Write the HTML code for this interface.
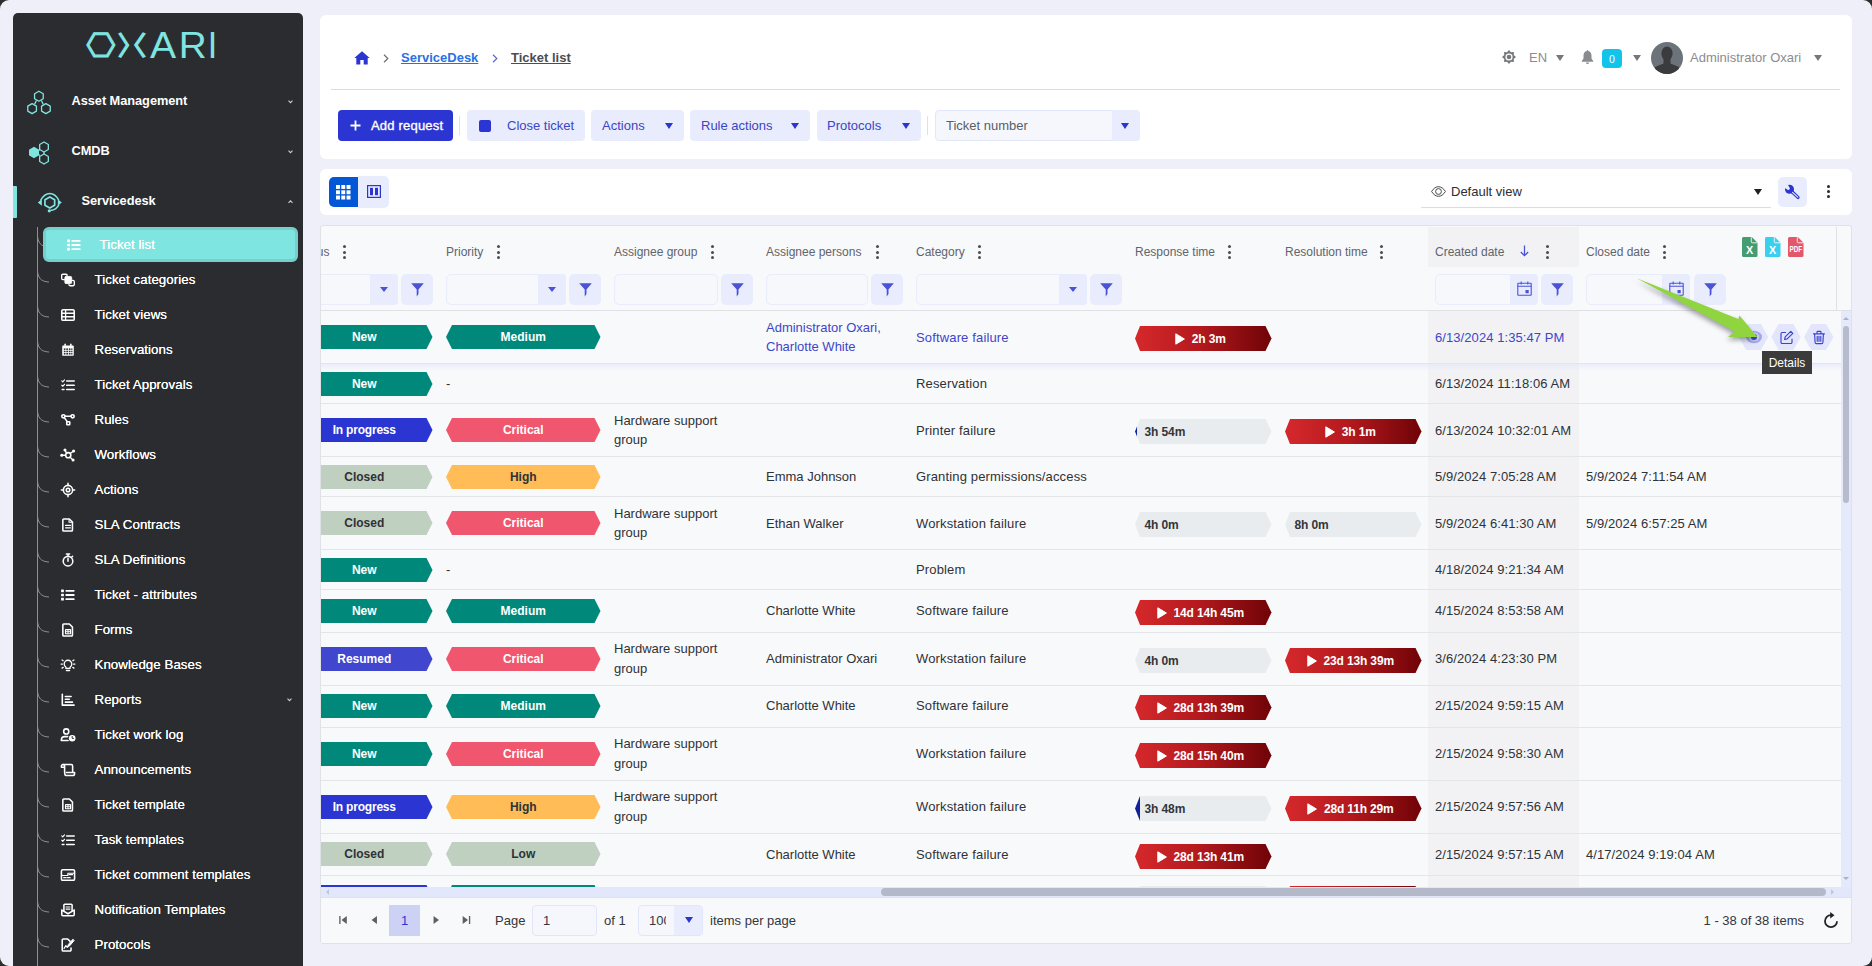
<!DOCTYPE html>
<html lang="en"><head><meta charset="utf-8"><title>Ticket list</title>
<style>
*{box-sizing:border-box;margin:0;padding:0}
html,body{width:1872px;height:966px;overflow:hidden}
body{background:#eeeff8;font-family:"Liberation Sans",Arial,sans-serif;font-size:13px;color:#2f3237;position:relative}
.abs{position:absolute}
svg{display:block;overflow:visible}
/* page corners */
.corner{position:absolute;width:9px;height:9px;background:#2d2d2d}
.corner i{position:absolute;width:18px;height:18px;border-radius:9px;background:#eeeff8}
/* sidebar */
#side{position:absolute;left:13px;top:13px;width:290px;height:960px;background:#2b2c2f;border-radius:5px 5px 0 0;overflow:hidden}
.top{position:absolute;left:0;width:290px;height:50px;color:#fff;font-weight:bold;font-size:12.8px;letter-spacing:-0.05px}
.top span{position:absolute;top:50%;transform:translateY(-50%);white-space:nowrap}
.top .chev{position:absolute;right:10px;top:50%;margin-top:0px}
.sub{position:absolute;left:0;width:290px;height:35px;color:#fff;font-size:13.3px}
.sub span{position:absolute;left:81.5px;top:50%;margin-top:-1px;transform:translateY(-50%);white-space:nowrap;letter-spacing:0.05px;text-shadow:0 0 0.4px #fff}
.sub svg.ic{position:absolute;left:47px;top:50%;margin-top:-8px}
.sub .br{position:absolute;left:24px;top:0}
/* panels */
#top{position:absolute;left:320px;top:15px;width:1532px;height:144px;background:#fff;border-radius:6px}
#vbar{position:absolute;left:320px;top:169px;width:1532px;height:46px;background:#fff;border-radius:6px}
#grid{position:absolute;left:320px;top:225px;width:1532px;height:719px;background:#f8f9fb;border:1px solid #dfe1e6;border-radius:3px;overflow:hidden}
.btn{position:absolute;top:95px;height:31px;border-radius:4px;background:#e8ecfd;color:#3b45c4;font-size:13px;white-space:nowrap}
.btn span{position:absolute;top:50%;margin-top:-1px;transform:translateY(-50%)}
.tri{position:absolute;width:0;height:0;border-left:4.5px solid transparent;border-right:4.5px solid transparent;border-top:6px solid #2b35d1}
/* grid */
.hd{position:absolute;top:17px;font-size:12px;color:#60646b;white-space:nowrap;height:16px;line-height:16px}
.dots{position:absolute;top:18px;width:3px}
.dots i{display:block;width:3px;height:3px;border-radius:50%;background:#4a4d52;margin-bottom:2.5px}
.fin{position:absolute;top:47px;height:31px;border:1px solid #e8ecfc;border-radius:5px;background:#f7f8fc}
.fin .dd{position:absolute;right:-1px;top:-1px;width:28px;height:31px;background:#e8ecfd;border-radius:0 4px 4px 0}
.fbtn{position:absolute;top:47px;width:32px;height:31px;border-radius:5px;background:#e8ecfd}
.row{position:absolute;left:0;width:1520px;border-bottom:1px solid #e4e5e9}
.c{position:absolute;font-size:13px;line-height:19px;color:#2f3237;white-space:nowrap}
.row.hov .c{color:#3d46c9}
.bdg{position:absolute;height:24px;font-weight:bold;font-size:12px;color:#fff;text-align:center;line-height:24px;white-space:nowrap}
.tb{position:absolute;height:25px;font-weight:bold;font-size:12px;line-height:27px;white-space:nowrap;width:136.5px;clip-path:polygon(5px 0,130.5px 0,136.5px 50%,130.5px 100%,5px 100%,0 50%)}
.tb.red{background:linear-gradient(90deg,#d5292c 0%,#b51a1e 45%,#6f0307 100%);color:#fff;text-align:center;padding-right:6px;letter-spacing:-.15px}
.tb.gr{background:#e9ecef;color:#33363b;text-align:left;padding-left:9.5px;letter-spacing:-0.1px}
.tb.red svg{display:inline-block;vertical-align:-2px;margin-right:7px}
</style></head><body>
<div class="corner" style="left:0;top:0"><i style="left:0;top:0"></i></div>
<div class="corner" style="right:0;top:0"><i style="right:0;top:0"></i></div>
<div class="corner" style="left:0;bottom:0"><i style="left:0;bottom:0"></i></div>
<div class="corner" style="right:0;bottom:0"><i style="right:0;bottom:0"></i></div>
<div id="side">
<svg class="abs" style="left:60px;top:10px" width="170" height="50" viewBox="60 10 170 50" fill="#7fe5e0"><title>OXARI</title>
<text id="lgO" x="0" y="0" font-family="DejaVu Sans, sans-serif" font-size="40" stroke="#7fe5e0" stroke-width="1.3" transform="translate(73.21 44.33) scale(0.836 0.839)">⎔</text>
<text id="lgX1" x="0" y="0" font-family="Noto Sans CJK JP, sans-serif" font-size="30" stroke="#7fe5e0" stroke-width="1.5" transform="translate(104.83 41.53) scale(0.875 0.867)">〉</text>
<text id="lgX2" x="0" y="0" font-family="Noto Sans CJK JP, sans-serif" font-size="30" stroke="#7fe5e0" stroke-width="1.5" transform="translate(105.38 41.53) scale(0.925 0.867)">〈</text>
<text id="lgA" x="0" y="0" font-family="Liberation Sans, sans-serif" font-size="36" transform="translate(136.90 45) scale(1.087 1.05)">A</text>
<text id="lgR" x="0" y="0" font-family="Liberation Sans, sans-serif" font-size="36" transform="translate(165.77 45) scale(1.076 1)">R</text>
<text id="lgI" x="0" y="0" font-family="Liberation Sans, sans-serif" font-size="36" transform="translate(194.75 45) scale(0.95 1)">I</text>
</svg>
<div class="top" style="top:62px"><svg class="abs" style="left:12px;top:13.500px" width="28" height="28" viewBox="0 0 28 28" fill="none" stroke="#7fe5e0" stroke-width="1.300" stroke-linejoin="round"><polygon points="13.90,2.20 18.23,4.70 18.23,9.70 13.90,12.20 9.57,9.70 9.57,4.70"/><polygon points="7.10,14.60 11.43,17.10 11.43,22.10 7.10,24.60 2.77,22.10 2.77,17.10"/><polygon points="20.90,14.60 25.23,17.10 25.23,22.10 20.90,24.60 16.57,22.10 16.57,17.10"/><path d="M11.400 11.500l-1.800 3.800M16.400 11.500l1.800 3.800"/></svg><span style="left:58.500px">Asset Management</span><svg class="chev" width="5" height="3.400" viewBox="0 0 6 4" fill="none" stroke="#cfcfcf" stroke-width="1.300"><path d="M.6.700L3 3.100 5.400.700"/></svg></div>
<div class="top" style="top:112px"><svg class="abs" style="left:12px;top:12.500px" width="28" height="28" viewBox="0 0 28 28" fill="none" stroke="#7fe5e0" stroke-width="1.300" stroke-linejoin="round"><polygon fill="#7fe5e0" points="9.00,9.50 13.33,12.00 13.33,17.00 9.00,19.50 4.67,17.00 4.67,12.00"/><polygon points="19.00,4.00 23.33,6.50 23.33,11.50 19.00,14.00 14.67,11.50 14.67,6.50"/><polygon points="19.00,16.00 23.33,18.50 23.33,23.50 19.00,26.00 14.67,23.50 14.67,18.50"/><path d="M13.500 12.500l1.400-1M13.500 16.500l1.400 1M19 14v2"/></svg><span style="left:58.500px">CMDB</span><svg class="chev" width="5" height="3.400" viewBox="0 0 6 4" fill="none" stroke="#cfcfcf" stroke-width="1.300"><path d="M.6.700L3 3.100 5.400.700"/></svg></div>
<div class="top" style="top:162px"><i class="abs" style="left:0;top:11px;width:4px;height:32px;background:#7fe5e0;border-radius:0 1px 1px 0"></i><svg class="abs" style="left:24px;top:13px" width="28" height="28" viewBox="0 0 28 28" fill="none" stroke="#7fe5e0" stroke-width="1.500" stroke-linejoin="round"><polygon points="12.80,8.90 17.65,11.70 17.65,17.30 12.80,20.10 7.95,17.30 7.95,11.70" stroke-width="1.700"/><path d="M3.500 12.500C6 8 9.500 5.500 12.800 5.500S19.600 8 22 12.500"/><path d="M22 16.500c-1.500 3.500-4.500 5.500-8.500 6"/><polygon fill="#7fe5e0" stroke="none" points="0.800,14.500 4.800,11.300 4.800,17.700"/><polygon fill="#7fe5e0" stroke="none" points="24.800,14.500 20.800,11.300 20.800,17.700"/><circle cx="12.300" cy="22.800" r="1.600" fill="#7fe5e0" stroke="none"/></svg><span style="left:68.500px">Servicedesk</span><svg class="chev" width="5" height="3.400" viewBox="0 0 6 4" fill="none" stroke="#cfcfcf" stroke-width="1.300"><path d="M.6 3.300L3 .9 5.400 3.300"/></svg></div>
<div class="abs" style="left:24px;top:214px;width:1px;height:760px;background:#8f9092"></div>
<div class="sub" style="top:214px"><svg class="br" width="14" height="35" viewBox="0 0 14 35" fill="none" stroke="#8f9092" stroke-width="1"><path d="M.5 8.500C.8 15 3.500 19.800 12 20"/></svg><div class="abs" style="left:30px;top:0;width:255px;height:35px;background:#7fe5e0;border:3px solid #76cfcb;border-radius:6px"></div><svg class="ic" style="left:53px" width="16" height="16" viewBox="0 0 18 18" fill="none" stroke="#fff" stroke-width="1.75" stroke-linecap="round" stroke-linejoin="round"><g stroke="none" fill="#fff"><rect x="1.200" y="2.800" width="3.200" height="3" rx=".6"/><rect x="1.200" y="7.500" width="3.200" height="3" rx=".6"/><rect x="1.200" y="12.200" width="3.200" height="3" rx=".6"/><rect x="6" y="3.300" width="10.500" height="2" rx="1"/><rect x="6" y="8" width="10.500" height="2" rx="1"/><rect x="6" y="12.700" width="10.500" height="2" rx="1"/></g></svg><span style="left:86.500px">Ticket list</span></div>
<div class="sub" style="top:249px"><svg class="br" width="14" height="35" viewBox="0 0 14 35" fill="none" stroke="#8f9092" stroke-width="1"><path d="M.5 8.500C.8 15 3.500 19.800 12 20"/></svg><svg class="ic" width="16" height="16" viewBox="0 0 18 18" fill="none" stroke="#fff" stroke-width="1.75" stroke-linecap="round" stroke-linejoin="round"><path d="M5 8.600H3.200a1.300 1.300 0 0 1-1.300-1.300V3.800a1.300 1.300 0 0 1 1.300-1.300h3.500a1.300 1.300 0 0 1 1.300 1.300" stroke-width="1.500"/><path d="M13 9.400h1.800a1.300 1.300 0 0 1 1.300 1.300v3.500a1.300 1.300 0 0 1-1.300 1.300h-3.500a1.300 1.300 0 0 1-1.300-1.300" stroke-width="1.500"/><rect x="5.500" y="5" width="7.600" height="8" rx="1.200" fill="#fff" stroke-width="1"/></svg><span>Ticket categories</span></div>
<div class="sub" style="top:284px"><svg class="br" width="14" height="35" viewBox="0 0 14 35" fill="none" stroke="#8f9092" stroke-width="1"><path d="M.5 8.500C.8 15 3.500 19.800 12 20"/></svg><svg class="ic" width="16" height="16" viewBox="0 0 18 18" fill="none" stroke="#fff" stroke-width="1.75" stroke-linecap="round" stroke-linejoin="round"><rect x="2" y="3" width="14" height="12" rx="1.600"/><path d="M2 7h14M2 11h14M6.300 3.500v11" stroke-width="1.500"/></svg><span>Ticket views</span></div>
<div class="sub" style="top:319px"><svg class="br" width="14" height="35" viewBox="0 0 14 35" fill="none" stroke="#8f9092" stroke-width="1"><path d="M.5 8.500C.8 15 3.500 19.800 12 20"/></svg><svg class="ic" width="16" height="16" viewBox="0 0 18 18" fill="none" stroke="#fff" stroke-width="1.75" stroke-linecap="round" stroke-linejoin="round"><g stroke="none" fill="#fff"><path d="M3.500 4h11a1 1 0 0 1 1 1v9.500a1 1 0 0 1-1 1h-11a1 1 0 0 1-1-1V5a1 1 0 0 1 1-1z"/><rect x="5" y="1.800" width="1.600" height="3.500" rx=".8"/><rect x="11.400" y="1.800" width="1.600" height="3.500" rx=".8"/></g><g stroke="none" fill="#2b2c2f"><rect x="4.300" y="7.200" width="1.900" height="1.700"/><rect x="7.100" y="7.200" width="1.900" height="1.700"/><rect x="9.900" y="7.200" width="1.900" height="1.700"/><rect x="12.600" y="7.200" width="1.400" height="1.700"/><rect x="4.300" y="9.800" width="1.900" height="1.700"/><rect x="7.100" y="9.800" width="1.900" height="1.700"/><rect x="9.900" y="9.800" width="1.900" height="1.700"/><rect x="12.600" y="9.800" width="1.400" height="1.700"/><rect x="4.300" y="12.400" width="1.900" height="1.700"/><rect x="7.100" y="12.400" width="1.900" height="1.700"/><rect x="9.900" y="12.400" width="1.900" height="1.700"/><rect x="12.600" y="12.400" width="1.400" height="1.700"/></g></svg><span>Reservations</span></div>
<div class="sub" style="top:354px"><svg class="br" width="14" height="35" viewBox="0 0 14 35" fill="none" stroke="#8f9092" stroke-width="1"><path d="M.5 8.500C.8 15 3.500 19.800 12 20"/></svg><svg class="ic" width="16" height="16" viewBox="0 0 18 18" fill="none" stroke="#fff" stroke-width="1.75" stroke-linecap="round" stroke-linejoin="round"><path d="M2 4.300l1.100 1.100 2-2.200M2 9.300l1.100 1.100 2-2.200" stroke-width="1.300"/><path d="M7.500 4.400h8.500M7.500 9.200h8.500M7.500 14h8.500M2.500 14h2" stroke-width="1.700"/></svg><span>Ticket Approvals</span></div>
<div class="sub" style="top:389px"><svg class="br" width="14" height="35" viewBox="0 0 14 35" fill="none" stroke="#8f9092" stroke-width="1"><path d="M.5 8.500C.8 15 3.500 19.800 12 20"/></svg><svg class="ic" width="16" height="16" viewBox="0 0 18 18" fill="none" stroke="#fff" stroke-width="1.75" stroke-linecap="round" stroke-linejoin="round"><circle cx="3.800" cy="4.800" r="1.800"/><circle cx="14.200" cy="4.800" r="1.800"/><rect x="7.600" y="11" width="3.400" height="3.400" rx=".6"/><path d="M5.600 4.800h6.800M4.800 6.300l3.300 4.500"/></svg><span>Rules</span></div>
<div class="sub" style="top:424px"><svg class="br" width="14" height="35" viewBox="0 0 14 35" fill="none" stroke="#8f9092" stroke-width="1"><path d="M.5 8.500C.8 15 3.500 19.800 12 20"/></svg><svg class="ic" width="16" height="16" viewBox="0 0 18 18" fill="none" stroke="#fff" stroke-width="1.75" stroke-linecap="round" stroke-linejoin="round"><circle cx="9.300" cy="9.200" r="2.900"/><path d="M7.500 6.900L6 4.400M11.500 7.300l3-2.300M11.300 11.400l2.700 2.700M6.400 9.300H3" stroke-width="1.500"/><g fill="#fff" stroke="none"><circle cx="5.600" cy="3.500" r="1.700"/><circle cx="15.300" cy="4.600" r="1.700"/><circle cx="14.700" cy="14.700" r="1.700"/><circle cx="2" cy="9.300" r="1.700"/></g></svg><span>Workflows</span></div>
<div class="sub" style="top:459px"><svg class="br" width="14" height="35" viewBox="0 0 14 35" fill="none" stroke="#8f9092" stroke-width="1"><path d="M.5 8.500C.8 15 3.500 19.800 12 20"/></svg><svg class="ic" width="16" height="16" viewBox="0 0 18 18" fill="none" stroke="#fff" stroke-width="1.75" stroke-linecap="round" stroke-linejoin="round"><circle cx="9" cy="9" r="5.200"/><circle cx="9" cy="9" r="2" /><path d="M9 1.500v2.300M9 14.200v2.300M1.500 9h2.300M14.200 9h2.300" stroke-width="1.700"/></svg><span>Actions</span></div>
<div class="sub" style="top:494px"><svg class="br" width="14" height="35" viewBox="0 0 14 35" fill="none" stroke="#8f9092" stroke-width="1"><path d="M.5 8.500C.8 15 3.500 19.800 12 20"/></svg><svg class="ic" width="16" height="16" viewBox="0 0 18 18" fill="none" stroke="#fff" stroke-width="1.75" stroke-linecap="round" stroke-linejoin="round"><path d="M4.200 2.200h6.300l3.500 3.500v9.100a1 1 0 0 1-1 1H4.200a1 1 0 0 1-1-1V3.200a1 1 0 0 1 1-1z"/><path d="M6.300 9.500h5.400M6.300 12.200h5.400" stroke-width="1.500"/><path d="M10.200 2.500v3.500h3.500" stroke-width="1.200"/></svg><span>SLA Contracts</span></div>
<div class="sub" style="top:529px"><svg class="br" width="14" height="35" viewBox="0 0 14 35" fill="none" stroke="#8f9092" stroke-width="1"><path d="M.5 8.500C.8 15 3.500 19.800 12 20"/></svg><svg class="ic" width="16" height="16" viewBox="0 0 18 18" fill="none" stroke="#fff" stroke-width="1.75" stroke-linecap="round" stroke-linejoin="round"><circle cx="9" cy="10.300" r="5.400"/><path d="M9 7.300v3.200M7.200 2.300h3.600M9 2.500v2.300M13.300 5.600l.9-.9" stroke-width="1.700"/></svg><span>SLA Definitions</span></div>
<div class="sub" style="top:564px"><svg class="br" width="14" height="35" viewBox="0 0 14 35" fill="none" stroke="#8f9092" stroke-width="1"><path d="M.5 8.500C.8 15 3.500 19.800 12 20"/></svg><svg class="ic" width="16" height="16" viewBox="0 0 18 18" fill="none" stroke="#fff" stroke-width="1.75" stroke-linecap="round" stroke-linejoin="round"><g stroke="none" fill="#fff"><rect x="1.200" y="2.800" width="3.200" height="3" rx=".6"/><rect x="1.200" y="7.500" width="3.200" height="3" rx=".6"/><rect x="1.200" y="12.200" width="3.200" height="3" rx=".6"/><rect x="6" y="3.300" width="10.500" height="2" rx="1"/><rect x="6" y="8" width="10.500" height="2" rx="1"/><rect x="6" y="12.700" width="10.500" height="2" rx="1"/></g></svg><span>Ticket - attributes</span></div>
<div class="sub" style="top:599px"><svg class="br" width="14" height="35" viewBox="0 0 14 35" fill="none" stroke="#8f9092" stroke-width="1"><path d="M.5 8.500C.8 15 3.500 19.800 12 20"/></svg><svg class="ic" width="16" height="16" viewBox="0 0 18 18" fill="none" stroke="#fff" stroke-width="1.75" stroke-linecap="round" stroke-linejoin="round"><path d="M4.200 2.200h6.300l3.500 3.500v9.100a1 1 0 0 1-1 1H4.200a1 1 0 0 1-1-1V3.200a1 1 0 0 1 1-1z"/><rect x="6.200" y="8.600" width="5.600" height="4.600" rx=".4" stroke-width="1.300"/><path d="M6.200 10.900h5.600M9 8.600v4.600" stroke-width="1.100"/></svg><span>Forms</span></div>
<div class="sub" style="top:634px"><svg class="br" width="14" height="35" viewBox="0 0 14 35" fill="none" stroke="#8f9092" stroke-width="1"><path d="M.5 8.500C.8 15 3.500 19.800 12 20"/></svg><svg class="ic" width="16" height="16" viewBox="0 0 18 18" fill="none" stroke="#fff" stroke-width="1.75" stroke-linecap="round" stroke-linejoin="round"><path d="M6.700 11.600c-1.200-.8-2-2.100-2-3.600a4.300 4.300 0 0 1 8.600 0c0 1.500-.8 2.800-2 3.600v1.200H6.700z" stroke-width="1.500"/><path d="M7.300 15.200h3.400" stroke-width="1.700"/><path d="M1.200 8h1.600M15.200 8h1.600M2.300 3.300l1.300.9M15.700 3.300l-1.300.9M2.300 12.500l1.300-.8M15.700 12.500l-1.300-.8" stroke-width="1.400"/></svg><span>Knowledge Bases</span></div>
<div class="sub" style="top:669px"><svg class="br" width="14" height="35" viewBox="0 0 14 35" fill="none" stroke="#8f9092" stroke-width="1"><path d="M.5 8.500C.8 15 3.500 19.800 12 20"/></svg><svg class="ic" width="16" height="16" viewBox="0 0 18 18" fill="none" stroke="#fff" stroke-width="1.75" stroke-linecap="round" stroke-linejoin="round"><path d="M2.600 2.500v12.300h13.200" stroke-width="1.800"/><path d="M6 5h6.500M6 8.200h4.500M6 11.400h8" stroke-width="1.800"/></svg><span>Reports</span><svg class="abs" style="right:11px;top:16px" width="5" height="3.400" viewBox="0 0 6 4" fill="none" stroke="#cfcfcf" stroke-width="1.300"><path d="M.6.700L3 3.100 5.400.700"/></svg></div>
<div class="sub" style="top:704px"><svg class="br" width="14" height="35" viewBox="0 0 14 35" fill="none" stroke="#8f9092" stroke-width="1"><path d="M.5 8.500C.8 15 3.500 19.800 12 20"/></svg><svg class="ic" width="16" height="16" viewBox="0 0 18 18" fill="none" stroke="#fff" stroke-width="1.75" stroke-linecap="round" stroke-linejoin="round"><circle cx="7" cy="5" r="2.900"/><path d="M1.600 15v-.8c0-2 1.600-3.400 3.600-3.400h3.400" /><path d="M1.600 15.200h7.500"/><circle cx="13.700" cy="12.600" r="3.700" fill="#fff" stroke="none"/><path d="M13.700 10.600v2.200h1.500" stroke="#2b2c2f" stroke-width="1.100"/></svg><span>Ticket work log</span></div>
<div class="sub" style="top:739px"><svg class="br" width="14" height="35" viewBox="0 0 14 35" fill="none" stroke="#8f9092" stroke-width="1"><path d="M.5 8.500C.8 15 3.500 19.800 12 20"/></svg><svg class="ic" width="16" height="16" viewBox="0 0 18 18" fill="none" stroke="#fff" stroke-width="1.75" stroke-linecap="round" stroke-linejoin="round"><path d="M5.200 12.200V4.600a1.800 1.800 0 0 0-3.600 0v1.200h3.200"/><path d="M3.400 2.800h9.200a1.600 1.600 0 0 1 1.600 1.600v6.800"/><path d="M7.200 11.800h9.200v1.300a2 2 0 0 1-2 2H7.400a2 2 0 0 1-2-2" /></svg><span>Announcements</span></div>
<div class="sub" style="top:774px"><svg class="br" width="14" height="35" viewBox="0 0 14 35" fill="none" stroke="#8f9092" stroke-width="1"><path d="M.5 8.500C.8 15 3.500 19.800 12 20"/></svg><svg class="ic" width="16" height="16" viewBox="0 0 18 18" fill="none" stroke="#fff" stroke-width="1.75" stroke-linecap="round" stroke-linejoin="round"><path d="M4.200 2.200h6.300l3.500 3.500v9.100a1 1 0 0 1-1 1H4.200a1 1 0 0 1-1-1V3.200a1 1 0 0 1 1-1z"/><rect x="6.200" y="8.600" width="5.600" height="4.600" rx=".4" stroke-width="1.300"/><path d="M6.200 10.900h5.600M9 8.600v4.600" stroke-width="1.100"/></svg><span>Ticket template</span></div>
<div class="sub" style="top:809px"><svg class="br" width="14" height="35" viewBox="0 0 14 35" fill="none" stroke="#8f9092" stroke-width="1"><path d="M.5 8.500C.8 15 3.500 19.800 12 20"/></svg><svg class="ic" width="16" height="16" viewBox="0 0 18 18" fill="none" stroke="#fff" stroke-width="1.75" stroke-linecap="round" stroke-linejoin="round"><path d="M2 4.300l1.100 1.100 2-2.200M2 9.300l1.100 1.100 2-2.200" stroke-width="1.300"/><path d="M7.500 4.400h8.500M7.500 9.200h8.500M7.500 14h8.500M2.500 14h2" stroke-width="1.700"/></svg><span>Task templates</span></div>
<div class="sub" style="top:844px"><svg class="br" width="14" height="35" viewBox="0 0 14 35" fill="none" stroke="#8f9092" stroke-width="1"><path d="M.5 8.500C.8 15 3.500 19.800 12 20"/></svg><svg class="ic" width="16" height="16" viewBox="0 0 18 18" fill="none" stroke="#fff" stroke-width="1.75" stroke-linecap="round" stroke-linejoin="round"><rect x="1.600" y="3" width="14.800" height="12" rx="1.600"/><path d="M4.200 12h2.200M8 12h3.400" stroke-width="1.500"/><path d="M10 8.600h4" stroke-width="1.500"/><path d="M1.800 9.600h7V7h7.400" stroke-width="1.200"/></svg><span>Ticket comment templates</span></div>
<div class="sub" style="top:879px"><svg class="br" width="14" height="35" viewBox="0 0 14 35" fill="none" stroke="#8f9092" stroke-width="1"><path d="M.5 8.500C.8 15 3.500 19.800 12 20"/></svg><svg class="ic" width="16" height="16" viewBox="0 0 18 18" fill="none" stroke="#fff" stroke-width="1.75" stroke-linecap="round" stroke-linejoin="round"><path d="M2 9.200v5a1.300 1.300 0 0 0 1.300 1.300h11.400a1.300 1.300 0 0 0 1.300-1.300v-5"/><path d="M2 9.200l7 4 7-4"/><path d="M4.400 9.800V3.500a1 1 0 0 1 1-1h7.200a1 1 0 0 1 1 1v6.300"/><path d="M6.800 5.600h4.400M6.800 8h4.400" stroke-width="1.300"/></svg><span>Notification Templates</span></div>
<div class="sub" style="top:914px"><svg class="br" width="14" height="35" viewBox="0 0 14 35" fill="none" stroke="#8f9092" stroke-width="1"><path d="M.5 8.500C.8 15 3.500 19.800 12 20"/></svg><svg class="ic" width="16" height="16" viewBox="0 0 18 18" fill="none" stroke="#fff" stroke-width="1.75" stroke-linecap="round" stroke-linejoin="round"><path d="M12.400 12.500v2a1.200 1.200 0 0 1-1.200 1.200H3.700a1.200 1.200 0 0 1-1.200-1.200V3.500a1.200 1.200 0 0 1 1.200-1.200h5l2.600 2.600"/><path d="M4.600 13l2-3.400 1.600 2 1.400-1.600" stroke-width="1.400"/><path d="M15.800 4.200l-5 5.800-2 .6.400-2 5-5.800z" fill="#fff" stroke-width="1"/></svg><span>Protocols</span></div>
</div>
<div id="top">
<svg class="abs" style="left:34px;top:35.500px" width="16" height="14" viewBox="0 0 16 14" fill="#2b35d1"><path d="M8 .3L.3 7h2v6.400h4V9h3.400v4.400h4V7h2z"/></svg>
<svg class="abs" style="left:63px;top:38.500px" width="6" height="9" viewBox="0 0 6 9" fill="none" stroke="#6c6f75" stroke-width="1.200"><path d="M1 .8L4.800 4.500 1 8.200"/></svg>
<span class="abs" id="bc1" style="left:81px;top:34.500px;font-weight:bold;font-size:13px;color:#2a6fe6;text-decoration:underline;white-space:nowrap">ServiceDesk</span>
<svg class="abs" style="left:172px;top:38.500px" width="6" height="9" viewBox="0 0 6 9" fill="none" stroke="#5b6ad6" stroke-width="1.200"><path d="M1 .8L4.800 4.500 1 8.200"/></svg>
<span class="abs" id="bc2" style="left:191px;top:34.500px;font-weight:bold;font-size:13px;color:#4b4d52;text-decoration:underline;white-space:nowrap">Ticket list</span>
<div class="abs" style="left:11px;top:73.500px;width:1509px;height:1px;background:#dcdde0"></div>
<svg class="abs" style="left:1182px;top:34.700px" width="14" height="14" viewBox="0 0 14 14"><polygon fill="#77787b" points="7.00,0.00 8.95,2.29 11.95,2.05 11.71,5.05 14.00,7.00 11.71,8.95 11.95,11.95 8.95,11.71 7.00,14.00 5.05,11.71 2.05,11.95 2.29,8.95 0.00,7.00 2.29,5.05 2.05,2.05 5.05,2.29"/><circle cx="7" cy="7" r="3.600" fill="#fff"/><circle cx="7" cy="7" r="2.300" fill="#77787b"/></svg>
<span class="abs" id="en" style="left:1209px;top:34.500px;font-size:13px;color:#8a8c90;white-space:nowrap">EN</span>
<i class="abs" style="left:1236px;top:39.5px;width:0;height:0;border-left:4px solid transparent;border-right:4px solid transparent;border-top:6px solid #75777b"></i>
<svg class="abs" style="left:1260.500px;top:34.500px" width="13" height="15" viewBox="0 0 13 15" fill="#8a8b8e"><path d="M6.500 1C4 1 2.500 3 2.500 5.500v3L.8 11v.8h11.400V11L10.500 8.500v-3C10.500 3 9 1 6.500 1z"/><path d="M5 12.600a1.500 1.500 0 0 0 3 0z"/><rect x="5.800" y="0" width="1.400" height="1.600" rx=".7"/></svg>
<div class="abs" style="left:1282px;top:33.500px;width:20px;height:19px;background:#12c4ea;border-radius:4px;color:#fff;font-size:10.500px;text-align:center;line-height:20.500px">0</div>
<i class="abs" style="left:1313px;top:39.5px;width:0;height:0;border-left:4px solid transparent;border-right:4px solid transparent;border-top:6px solid #75777b"></i>
<svg class="abs" style="left:1331px;top:27px" width="32" height="32" viewBox="0 0 32 32"><defs><clipPath id="avc"><circle cx="16" cy="16" r="16"/></clipPath></defs><circle cx="16" cy="16" r="16" fill="#6d737b"/><g clip-path="url(#avc)" fill="#3a3b3d"><ellipse cx="16" cy="11.500" rx="5.600" ry="7"/><path d="M12.500 16h7v5.500l8.500 3.500v8H4v-8l8.500-3.500z"/></g></svg>
<span class="abs" id="adm" style="left:1370px;top:34.500px;font-size:13px;color:#8a8c90;white-space:nowrap">Administrator Oxari</span>
<i class="abs" style="left:1494px;top:39.5px;width:0;height:0;border-left:4px solid transparent;border-right:4px solid transparent;border-top:6px solid #75777b"></i>
<div class="btn" style="left:18px;width:115px;background:#2b35d1;color:#fff;font-weight:bold"><svg class="abs" style="left:12px;top:10px" width="11" height="11" viewBox="0 0 11 11" stroke="#fff" stroke-width="1.800" fill="none"><path d="M5.500 .5v10M.5 5.500h10"/></svg><span id="b1" style="left:33px;font-size:13px;font-weight:normal;letter-spacing:.2px;-webkit-text-stroke:.35px #fff">Add request</span></div>
<div class="abs" style="left:139px;top:101px;width:1px;height:19px;background:#dfe1ea"></div>
<div class="btn" style="left:147px;width:118px"><i class="abs" style="left:12px;top:9.500px;width:12px;height:12px;border-radius:2px;background:#2b35d1"></i><span id="b2" style="left:40px">Close ticket</span></div>
<div class="btn" style="left:271px;width:93px"><span id="b3" style="left:11px">Actions</span><i class="tri" style="left:74px;top:13px"></i></div>
<div class="btn" style="left:370px;width:120px"><span id="b4" style="left:11px">Rule actions</span><i class="tri" style="left:101px;top:13px"></i></div>
<div class="btn" style="left:497px;width:104px"><span id="b5" style="left:10px">Protocols</span><i class="tri" style="left:85px;top:13px"></i></div>
<div class="abs" style="left:607px;top:101px;width:1px;height:19px;background:#dfe1ea"></div>
<div class="abs" style="left:615px;top:95px;width:205px;height:31px;border:1px solid #e2e6fa;border-radius:4px;background:#f6f7fc"><span id="tn" class="abs" style="left:10px;top:7px;font-size:13px;color:#5a5e66;white-space:nowrap">Ticket number</span><div class="abs" style="right:-1px;top:-1px;width:28px;height:31px;background:#e8ecfd;border-radius:0 4px 4px 0"><i class="tri" style="left:9px;top:13px"></i></div></div>
</div>
<div id="vbar">
<div class="abs" style="left:9px;top:8px;width:29px;height:30px;background:#0257d6;border-radius:5px 0 0 5px"><svg class="abs" style="left:6.500px;top:8px" width="14.500" height="14.500" viewBox="0 0 14 14" fill="#fff"><rect x="0" y="0" width="3.800" height="3.800"/><rect x="5.100" y="0" width="3.800" height="3.800"/><rect x="10.200" y="0" width="3.800" height="3.800"/><rect x="0" y="5.100" width="3.800" height="3.800"/><rect x="5.100" y="5.100" width="3.800" height="3.800"/><rect x="10.200" y="5.100" width="3.800" height="3.800"/><rect x="0" y="10.200" width="3.800" height="3.800"/><rect x="5.100" y="10.200" width="3.800" height="3.800"/><rect x="10.200" y="10.200" width="3.800" height="3.800"/></svg></div>
<div class="abs" style="left:38px;top:7px;width:31px;height:32px;background:#e8ecfd;border-radius:0 5px 5px 0"><svg class="abs" style="left:9px;top:9px" width="14" height="13" viewBox="0 0 14 13"><rect x=".6" y=".6" width="12.800" height="11.800" fill="none" stroke="#2b35d1" stroke-width="1.200"/><rect x="3" y="2.800" width="3" height="7.400" fill="#2b35d1"/><rect x="8" y="2.800" width="3" height="7.400" fill="#2b35d1"/></svg></div>
<div class="abs" style="left:1101px;top:38px;width:350px;height:1px;background:#dcdde2"></div>
<svg class="abs" style="left:1110.500px;top:17px" width="15" height="11" viewBox="0 0 15 11" fill="none" stroke="#45484e" stroke-width="1"><path d="M.6 5.500C2.500 2.300 5 .7 7.500 .7s5 1.600 6.900 4.800c-1.900 3.200-4.400 4.800-6.900 4.800S2.500 8.700.6 5.500z"/><circle cx="7.500" cy="5.500" r="2.900"/></svg>
<span class="abs" id="dv" style="left:1131px;top:14.500px;font-size:13px;color:#2c2e33;white-space:nowrap">Default view</span>
<i class="abs" style="left:1434px;top:20px;width:0;height:0;border-left:4.500px solid transparent;border-right:4.500px solid transparent;border-top:6px solid #202124"></i>
<div class="abs" style="left:1458px;top:8px;width:29px;height:30px;background:#e8ecfd;border-radius:5px"><svg class="abs" style="left:5.500px;top:6.800px" width="16" height="16" viewBox="0 0 16 16"><circle cx="5.500" cy="5.300" r="4.500" fill="#2b35d1"/><path d="M8 7.800l6 5.600" stroke="#2b35d1" stroke-width="3.300" stroke-linecap="round"/><path d="M8.500 8.300l5.300 4.900" stroke="#e8ecfd" stroke-width="1.100" stroke-linecap="round"/><path d="M3.600 .2l2 3.600a1.400 1.400 0 0 1-2 1.900L.2 3.600z" fill="#e8ecfd"/></svg></div>
<div class="abs" style="left:1507.300px;top:16px;width:3px"><i style="display:block;width:3.100px;height:3.100px;border-radius:50%;background:#27292d;margin-bottom:2px"></i><i style="display:block;width:3.100px;height:3.100px;border-radius:50%;background:#27292d;margin-bottom:2px"></i><i style="display:block;width:3.100px;height:3.100px;border-radius:50%;background:#27292d"></i></div>
</div>
<div id="grid"><div class="abs" style="left:0;top:1px;width:1530px;height:717px">
<div class="abs" style="left:1107px;top:0;width:151px;height:40px;background:#f2f2f5"></div>
<div class="abs" style="left:1107px;top:84px;width:151px;height:576px;background:#f2f2f5"></div>
<span class="hd" style="left:-25.500px">Status</span><div class="dots" style="left:22px"><i></i><i></i><i></i></div>
<div class="fin" style="left:-60px;width:137px"><div class="dd"><i class="tri" style="left:10px;top:12.500px;border-top-color:#4a53d6;border-left-width:4.300px;border-right-width:4.300px;border-top-width:5.800px"></i></div></div><div class="fbtn" style="left:80px"><svg class="abs" style="left:9.500px;top:9px" width="13" height="14" viewBox="0 0 13 14" fill="#4a53d6"><path d="M.2.300h12.600L7.500 6.400v4.700L5.700 13.600V6.400z"/></svg></div>
<span class="hd" id="h2" style="left:125px">Priority</span><div class="dots" style="left:176px"><i></i><i></i><i></i></div><div class="fin" style="left:125px;width:120px"><div class="dd"><i class="tri" style="left:10px;top:12.500px;border-top-color:#4a53d6;border-left-width:4.300px;border-right-width:4.300px;border-top-width:5.800px"></i></div></div><div class="fbtn" style="left:248px"><svg class="abs" style="left:9.500px;top:9px" width="13" height="14" viewBox="0 0 13 14" fill="#4a53d6"><path d="M.2.300h12.600L7.500 6.400v4.700L5.700 13.600V6.400z"/></svg></div>
<span class="hd" id="h3" style="left:293px">Assignee group</span><div class="dots" style="left:390px"><i></i><i></i><i></i></div><div class="fin" style="left:293px;width:104px"></div><div class="fbtn" style="left:400px"><svg class="abs" style="left:9.500px;top:9px" width="13" height="14" viewBox="0 0 13 14" fill="#4a53d6"><path d="M.2.300h12.600L7.500 6.400v4.700L5.700 13.600V6.400z"/></svg></div>
<span class="hd" id="h4" style="left:445px">Assignee persons</span><div class="dots" style="left:555px"><i></i><i></i><i></i></div><div class="fin" style="left:445px;width:102px"></div><div class="fbtn" style="left:550px"><svg class="abs" style="left:9.500px;top:9px" width="13" height="14" viewBox="0 0 13 14" fill="#4a53d6"><path d="M.2.300h12.600L7.500 6.400v4.700L5.700 13.600V6.400z"/></svg></div>
<span class="hd" id="h5" style="left:595px">Category</span><div class="dots" style="left:657px"><i></i><i></i><i></i></div><div class="fin" style="left:595px;width:171px"><div class="dd"><i class="tri" style="left:10px;top:12.500px;border-top-color:#4a53d6;border-left-width:4.300px;border-right-width:4.300px;border-top-width:5.800px"></i></div></div><div class="fbtn" style="left:769px"><svg class="abs" style="left:9.500px;top:9px" width="13" height="14" viewBox="0 0 13 14" fill="#4a53d6"><path d="M.2.300h12.600L7.500 6.400v4.700L5.700 13.600V6.400z"/></svg></div>
<span class="hd" id="h6" style="left:814px">Response time</span><div class="dots" style="left:907px"><i></i><i></i><i></i></div>
<span class="hd" id="h7" style="left:964px">Resolution time</span><div class="dots" style="left:1059px"><i></i><i></i><i></i></div>
<span class="hd" id="h8" style="left:1114px">Created date</span><svg class="abs" style="left:1199px;top:18px" width="9" height="12" viewBox="0 0 9 12" fill="none" stroke="#4a53d6" stroke-width="1.300"><path d="M4.500.500v10M.8 7l3.700 3.700L8.200 7"/></svg><div class="dots" style="left:1225px"><i></i><i></i><i></i></div><div class="fin" style="left:1114px;width:103px"><div class="dd" style="width:28px"><svg class="abs" style="left:6.500px;top:6.500px" width="15" height="15" viewBox="0 0 15 15" fill="none" stroke="#4a53d6" stroke-width="1.100"><rect x=".8" y="2.200" width="13.400" height="12" rx=".5"/><path d="M.8 5.300h13.400M4.200.500v3M10.800.500v3"/><rect x="8.500" y="9" width="3.200" height="3.200" fill="#4a53d6" stroke="none"/></svg></div></div><div class="fbtn" style="left:1220px"><svg class="abs" style="left:9.500px;top:9px" width="13" height="14" viewBox="0 0 13 14" fill="#4a53d6"><path d="M.2.300h12.600L7.500 6.400v4.700L5.700 13.600V6.400z"/></svg></div>
<span class="hd" id="h9" style="left:1265px">Closed date</span><div class="dots" style="left:1342px"><i></i><i></i><i></i></div><div class="fin" style="left:1265px;width:104px"><div class="dd" style="width:28px"><svg class="abs" style="left:6.500px;top:6.500px" width="15" height="15" viewBox="0 0 15 15" fill="none" stroke="#4a53d6" stroke-width="1.100"><rect x=".8" y="2.200" width="13.400" height="12" rx=".5"/><path d="M.8 5.300h13.400M4.200.500v3M10.800.500v3"/><rect x="8.500" y="9" width="3.200" height="3.200" fill="#4a53d6" stroke="none"/></svg></div></div><div class="fbtn" style="left:1373px"><svg class="abs" style="left:9.500px;top:9px" width="13" height="14" viewBox="0 0 13 14" fill="#4a53d6"><path d="M.2.300h12.600L7.500 6.400v4.700L5.700 13.600V6.400z"/></svg></div>
<svg class="abs" style="left:1421.3px;top:9.500px" width="15.500" height="20" viewBox="0 0 15.500 20"><path d="M1.500 0h8.300l5.700 5.700V18.500a1.500 1.500 0 0 1-1.500 1.500h-12.500A1.500 1.500 0 0 1 0 18.500v-17A1.500 1.500 0 0 1 1.500 0z" fill="#459c70"/><path d="M9.300 .2v4.600a1 1 0 0 0 1 1h5" fill="none" stroke="#fff" stroke-opacity=".85" stroke-width="1"/><text x="7.700" y="17.300" text-anchor="middle" font-family="Liberation Sans, sans-serif" font-weight="bold" font-size="10.800" fill="#fff">X</text></svg><svg class="abs" style="left:1444.3px;top:9.500px" width="15.500" height="20" viewBox="0 0 15.500 20"><path d="M1.500 0h8.300l5.700 5.700V18.500a1.500 1.500 0 0 1-1.500 1.500h-12.500A1.500 1.500 0 0 1 0 18.500v-17A1.500 1.500 0 0 1 1.500 0z" fill="#3acfee"/><path d="M9.300 .2v4.600a1 1 0 0 0 1 1h5" fill="none" stroke="#fff" stroke-opacity=".85" stroke-width="1"/><text x="7.700" y="17.300" text-anchor="middle" font-family="Liberation Sans, sans-serif" font-weight="bold" font-size="10.800" fill="#fff">X</text></svg><svg class="abs" style="left:1467px;top:9.500px" width="15.500" height="20" viewBox="0 0 15.500 20"><path d="M1.500 0h8.300l5.700 5.700V18.500a1.500 1.500 0 0 1-1.500 1.500h-12.500A1.500 1.500 0 0 1 0 18.500v-17A1.500 1.500 0 0 1 1.500 0z" fill="#e2586a"/><path d="M9.300 .2v4.600a1 1 0 0 0 1 1h5" fill="none" stroke="#fff" stroke-opacity=".85" stroke-width="1"/><text x="1.500" y="14.900" textLength="12.600" lengthAdjust="spacingAndGlyphs" font-family="Liberation Sans, sans-serif" font-weight="bold" font-size="8.800" fill="#fff">PDF</text></svg>
<div class="abs" style="left:0;top:83px;width:1530px;height:1px;background:#e0e1e6"></div>
<div class="abs" style="left:1515px;top:0;width:1px;height:83px;background:#e0e1e6"></div>
<div class="abs" style="left:0;top:84px;width:1520px;height:576px;overflow:hidden">
<div class="row hov" style="top:0px;height:53px"><div class="abs" style="left:0;right:0;bottom:-8px;height:7px;background:linear-gradient(rgba(226,230,250,.6),rgba(226,230,250,0))"></div><div class="bdg" style="top:14px;left:-25px;width:136.500px;background:#00897b;color:#fff;clip-path:polygon(0 0,130.500px 0,136.500px 50%,130.500px 100%,0 100%)">New</div><div class="bdg" style="top:14px;left:125px;width:154.500px;background:#00897b;color:#fff;clip-path:polygon(6px 0,148.500px 0,154.500px 50%,148.500px 100%,6px 100%,0 50%)">Medium</div><span class="c" style="left:445px;top:7px">Administrator Oxari,<br>Charlotte White</span><span class="c" style="left:595px;top:17px;letter-spacing:.15px">Software failure</span><div class="tb red" style="left:814px;top:15px"><svg width="10" height="12" viewBox="0 0 10 12" fill="#fff"><path d="M.8.800L9.400 6 .8 11.200z" stroke="#fff" stroke-width="1" stroke-linejoin="round"/></svg>2h 3m</div><span class="c" style="left:1114px;top:17px;letter-spacing:.08px">6/13/2024 1:35:47 PM</span></div>
<div class="row" style="top:53px;height:40px"><div class="bdg" style="top:8px;left:-25px;width:136.500px;background:#00897b;color:#fff;clip-path:polygon(0 0,130.500px 0,136.500px 50%,130.500px 100%,0 100%)">New</div><span class="c" style="left:125px;top:10px">-</span><span class="c" style="left:595px;top:10px;letter-spacing:.15px">Reservation</span><span class="c" style="left:1114px;top:10px;letter-spacing:.08px">6/13/2024 11:18:06 AM</span></div>
<div class="row" style="top:93px;height:53px"><div class="bdg" style="top:14px;left:-25px;width:136.500px;background:#2b35d1;color:#fff;letter-spacing:-0.2px;clip-path:polygon(0 0,130.500px 0,136.500px 50%,130.500px 100%,0 100%)">In progress</div><div class="bdg" style="top:14px;left:125px;width:154.500px;background:#f0566d;color:#fff;clip-path:polygon(6px 0,148.500px 0,154.500px 50%,148.500px 100%,6px 100%,0 50%)">Critical</div><span class="c" style="left:293px;top:7px">Hardware support<br>group</span><span class="c" style="left:595px;top:17px;letter-spacing:.15px">Printer failure</span><div class="tb gr" style="left:814px;top:15px;background:linear-gradient(90deg,#14219b 2px,#e9ecef 2px)">3h 54m</div><div class="tb red" style="left:964px;top:15px"><svg width="10" height="12" viewBox="0 0 10 12" fill="#fff"><path d="M.8.800L9.400 6 .8 11.200z" stroke="#fff" stroke-width="1" stroke-linejoin="round"/></svg>3h 1m</div><span class="c" style="left:1114px;top:17px;letter-spacing:.08px">6/13/2024 10:32:01 AM</span></div>
<div class="row" style="top:146px;height:40px"><div class="bdg" style="top:8px;left:-25px;width:136.500px;background:#bfcfc0;color:#2f3237;clip-path:polygon(0 0,130.500px 0,136.500px 50%,130.500px 100%,0 100%)">Closed</div><div class="bdg" style="top:8px;left:125px;width:154.500px;background:#ffbc57;color:#2f3237;clip-path:polygon(6px 0,148.500px 0,154.500px 50%,148.500px 100%,6px 100%,0 50%)">High</div><span class="c" style="left:445px;top:10px">Emma Johnson</span><span class="c" style="left:595px;top:10px;letter-spacing:.15px">Granting permissions/access</span><span class="c" style="left:1114px;top:10px;letter-spacing:.08px">5/9/2024 7:05:28 AM</span><span class="c" style="left:1265px;top:10px;letter-spacing:.08px">5/9/2024 7:11:54 AM</span></div>
<div class="row" style="top:186px;height:53px"><div class="bdg" style="top:14px;left:-25px;width:136.500px;background:#bfcfc0;color:#2f3237;clip-path:polygon(0 0,130.500px 0,136.500px 50%,130.500px 100%,0 100%)">Closed</div><div class="bdg" style="top:14px;left:125px;width:154.500px;background:#f0566d;color:#fff;clip-path:polygon(6px 0,148.500px 0,154.500px 50%,148.500px 100%,6px 100%,0 50%)">Critical</div><span class="c" style="left:293px;top:7px">Hardware support<br>group</span><span class="c" style="left:445px;top:17px">Ethan Walker</span><span class="c" style="left:595px;top:17px;letter-spacing:.15px">Workstation failure</span><div class="tb gr" style="left:814px;top:15px">4h 0m</div><div class="tb gr" style="left:964px;top:15px">8h 0m</div><span class="c" style="left:1114px;top:17px;letter-spacing:.08px">5/9/2024 6:41:30 AM</span><span class="c" style="left:1265px;top:17px;letter-spacing:.08px">5/9/2024 6:57:25 AM</span></div>
<div class="row" style="top:239px;height:40px"><div class="bdg" style="top:8px;left:-25px;width:136.500px;background:#00897b;color:#fff;clip-path:polygon(0 0,130.500px 0,136.500px 50%,130.500px 100%,0 100%)">New</div><span class="c" style="left:125px;top:10px">-</span><span class="c" style="left:595px;top:10px;letter-spacing:.15px">Problem</span><span class="c" style="left:1114px;top:10px;letter-spacing:.08px">4/18/2024 9:21:34 AM</span></div>
<div class="row" style="top:279px;height:43px"><div class="bdg" style="top:9px;left:-25px;width:136.500px;background:#00897b;color:#fff;clip-path:polygon(0 0,130.500px 0,136.500px 50%,130.500px 100%,0 100%)">New</div><div class="bdg" style="top:9px;left:125px;width:154.500px;background:#00897b;color:#fff;clip-path:polygon(6px 0,148.500px 0,154.500px 50%,148.500px 100%,6px 100%,0 50%)">Medium</div><span class="c" style="left:445px;top:11px">Charlotte White</span><span class="c" style="left:595px;top:11px;letter-spacing:.15px">Software failure</span><div class="tb red" style="left:814px;top:10px"><svg width="10" height="12" viewBox="0 0 10 12" fill="#fff"><path d="M.8.800L9.400 6 .8 11.200z" stroke="#fff" stroke-width="1" stroke-linejoin="round"/></svg>14d 14h 45m</div><span class="c" style="left:1114px;top:11px;letter-spacing:.08px">4/15/2024 8:53:58 AM</span></div>
<div class="row" style="top:322px;height:53px"><div class="bdg" style="top:14px;left:-25px;width:136.500px;background:#4046cd;color:#fff;clip-path:polygon(0 0,130.500px 0,136.500px 50%,130.500px 100%,0 100%)">Resumed</div><div class="bdg" style="top:14px;left:125px;width:154.500px;background:#f0566d;color:#fff;clip-path:polygon(6px 0,148.500px 0,154.500px 50%,148.500px 100%,6px 100%,0 50%)">Critical</div><span class="c" style="left:293px;top:6px;line-height:20px">Hardware support<br>group</span><span class="c" style="left:445px;top:16px">Administrator Oxari</span><span class="c" style="left:595px;top:16px;letter-spacing:.15px">Workstation failure</span><div class="tb gr" style="left:814px;top:15px">4h 0m</div><div class="tb red" style="left:964px;top:15px"><svg width="10" height="12" viewBox="0 0 10 12" fill="#fff"><path d="M.8.800L9.400 6 .8 11.200z" stroke="#fff" stroke-width="1" stroke-linejoin="round"/></svg>23d 13h 39m</div><span class="c" style="left:1114px;top:16px;letter-spacing:.08px">3/6/2024 4:23:30 PM</span></div>
<div class="row" style="top:375px;height:42px"><div class="bdg" style="top:8px;left:-25px;width:136.500px;background:#00897b;color:#fff;clip-path:polygon(0 0,130.500px 0,136.500px 50%,130.500px 100%,0 100%)">New</div><div class="bdg" style="top:8px;left:125px;width:154.500px;background:#00897b;color:#fff;clip-path:polygon(6px 0,148.500px 0,154.500px 50%,148.500px 100%,6px 100%,0 50%)">Medium</div><span class="c" style="left:445px;top:10px">Charlotte White</span><span class="c" style="left:595px;top:10px;letter-spacing:.15px">Software failure</span><div class="tb red" style="left:814px;top:9px"><svg width="10" height="12" viewBox="0 0 10 12" fill="#fff"><path d="M.8.800L9.400 6 .8 11.200z" stroke="#fff" stroke-width="1" stroke-linejoin="round"/></svg>28d 13h 39m</div><span class="c" style="left:1114px;top:10px;letter-spacing:.08px">2/15/2024 9:59:15 AM</span></div>
<div class="row" style="top:417px;height:53px"><div class="bdg" style="top:14px;left:-25px;width:136.500px;background:#00897b;color:#fff;clip-path:polygon(0 0,130.500px 0,136.500px 50%,130.500px 100%,0 100%)">New</div><div class="bdg" style="top:14px;left:125px;width:154.500px;background:#f0566d;color:#fff;clip-path:polygon(6px 0,148.500px 0,154.500px 50%,148.500px 100%,6px 100%,0 50%)">Critical</div><span class="c" style="left:293px;top:6px;line-height:20px">Hardware support<br>group</span><span class="c" style="left:595px;top:16px;letter-spacing:.15px">Workstation failure</span><div class="tb red" style="left:814px;top:15px"><svg width="10" height="12" viewBox="0 0 10 12" fill="#fff"><path d="M.8.800L9.400 6 .8 11.200z" stroke="#fff" stroke-width="1" stroke-linejoin="round"/></svg>28d 15h 40m</div><span class="c" style="left:1114px;top:16px;letter-spacing:.08px">2/15/2024 9:58:30 AM</span></div>
<div class="row" style="top:470px;height:53px"><div class="bdg" style="top:14px;left:-25px;width:136.500px;background:#2b35d1;color:#fff;letter-spacing:-0.2px;clip-path:polygon(0 0,130.500px 0,136.500px 50%,130.500px 100%,0 100%)">In progress</div><div class="bdg" style="top:14px;left:125px;width:154.500px;background:#ffbc57;color:#2f3237;clip-path:polygon(6px 0,148.500px 0,154.500px 50%,148.500px 100%,6px 100%,0 50%)">High</div><span class="c" style="left:293px;top:6px;line-height:20px">Hardware support<br>group</span><span class="c" style="left:595px;top:16px;letter-spacing:.15px">Workstation failure</span><div class="tb gr" style="left:814px;top:15px;background:linear-gradient(90deg,#14219b 5px,#e9ecef 5px)">3h 48m</div><div class="tb red" style="left:964px;top:15px"><svg width="10" height="12" viewBox="0 0 10 12" fill="#fff"><path d="M.8.800L9.400 6 .8 11.200z" stroke="#fff" stroke-width="1" stroke-linejoin="round"/></svg>28d 11h 29m</div><span class="c" style="left:1114px;top:16px;letter-spacing:.08px">2/15/2024 9:57:56 AM</span></div>
<div class="row" style="top:523px;height:42px"><div class="bdg" style="top:8px;left:-25px;width:136.500px;background:#bfcfc0;color:#2f3237;clip-path:polygon(0 0,130.500px 0,136.500px 50%,130.500px 100%,0 100%)">Closed</div><div class="bdg" style="top:8px;left:125px;width:154.500px;background:#bfcfc0;color:#2f3237;clip-path:polygon(6px 0,148.500px 0,154.500px 50%,148.500px 100%,6px 100%,0 50%)">Low</div><span class="c" style="left:445px;top:11px">Charlotte White</span><span class="c" style="left:595px;top:11px;letter-spacing:.15px">Software failure</span><div class="tb red" style="left:814px;top:10px"><svg width="10" height="12" viewBox="0 0 10 12" fill="#fff"><path d="M.8.800L9.400 6 .8 11.200z" stroke="#fff" stroke-width="1" stroke-linejoin="round"/></svg>28d 13h 41m</div><span class="c" style="left:1114px;top:11px;letter-spacing:.08px">2/15/2024 9:57:15 AM</span><span class="c" style="left:1265px;top:11px;letter-spacing:.08px">4/17/2024 9:19:04 AM</span></div>
<div class="row" style="top:565px;height:53px"><div class="bdg" style="top:9px;left:-25px;width:136.500px;background:#2b35d1;color:#fff;letter-spacing:-0.2px;clip-path:polygon(0 0,130.500px 0,136.500px 50%,130.500px 100%,0 100%)">In progress</div><div class="bdg" style="top:9px;left:125px;width:154.500px;background:#00897b;color:#fff;clip-path:polygon(6px 0,148.500px 0,154.500px 50%,148.500px 100%,6px 100%,0 50%)">Medium</div><div class="tb gr" style="left:814px;top:10px"></div><div class="tb red" style="left:964px;top:10px"></div></div>
</div>
<svg class="abs" style="left:1410px;top:95px" width="110" height="32" viewBox="1410 95 110 32"><g fill="#e2e5fb"><polygon points="1417.8,110 1425.15,97 1439.85,97 1447.2,110 1439.85,123 1425.15,123"/><polygon points="1450.3,110 1457.65,97 1472.35,97 1479.7,110 1472.35,123 1457.65,123"/><polygon points="1483.0,110 1490.3500000000001,97 1505.05,97 1512.4,110 1505.05,123 1490.3500000000001,123"/></g><ellipse cx="1433" cy="110" rx="8" ry="6.200" fill="#a4a8ea"/><ellipse cx="1433" cy="110" rx="5.300" ry="4.600" fill="#c9ccf5"/><circle cx="1433" cy="110" r="3" fill="#3a43cf"/><g fill="none" stroke="#3a43cf" stroke-width="1.150" stroke-linejoin="round" stroke-linecap="round"><path d="M1464.500 105.500h-3.300a1.200 1.200 0 0 0-1.200 1.200v8.600a1.200 1.200 0 0 0 1.200 1.200h8.600a1.200 1.200 0 0 0 1.200-1.200V112"/><path d="M1469.800 104.300l2 2-5.600 5.600-2.600.600.600-2.600z"/></g><g fill="none" stroke="#3a43cf" stroke-width="1.150" stroke-linecap="round" stroke-linejoin="round"><path d="M1492.500 106.800h11M1496 106.500v-1.300a.8.800 0 0 1 .8-.8h2.400a.8.800 0 0 1 .8.800v1.300M1493.600 107l.5 8.500a1.200 1.200 0 0 0 1.200 1.100h5.400a1.200 1.200 0 0 0 1.200-1.100l.5-8.500M1496.200 109.300v5M1498 109.300v5M1499.800 109.300v5"/></g></svg>
<div class="abs" id="tip" style="left:1441px;top:124px;width:50px;height:23px;background:#3b3b3b;color:#fff;font-size:12px;text-align:center;line-height:25px">Details</div>
<svg class="abs" style="left:1300px;top:40px;filter:drop-shadow(-1px 3px 2.5px rgba(50,50,60,.45))" width="160" height="90" viewBox="1300 40 160 90"><polygon fill="#90d440" points="1315.8,51.2 1417.3,92.0 1418.5,88.5 1436.5,110.0 1407.0,110.0 1414.0,104.8"/></svg>
<div class="abs" style="left:1520px;top:84px;width:10px;height:576px;background:#e5e9fc"></div>
<i class="abs" style="left:1522px;top:90px;width:0;height:0;border-left:3px solid transparent;border-right:3px solid transparent;border-bottom:3.500px solid #adb0be"></i>
<i class="abs" style="left:1522px;top:650px;width:0;height:0;border-left:3px solid transparent;border-right:3px solid transparent;border-top:3.500px solid #adb0be"></i>
<div class="abs" style="left:1522px;top:99px;width:6px;height:177px;background:#b7bbcb;border-radius:3px"></div>
<div class="abs" style="left:0;top:660px;width:1530px;height:10px;background:#e3e7fb"></div>
<i class="abs" style="left:4.500px;top:662px;width:0;height:0;border-top:3px solid transparent;border-bottom:3px solid transparent;border-right:3.500px solid #c3c6d4"></i>
<i class="abs" style="left:1510px;top:662px;width:0;height:0;border-top:3px solid transparent;border-bottom:3px solid transparent;border-left:3.500px solid #c3c6d4"></i>
<div class="abs" style="left:560px;top:661px;width:945px;height:8px;background:#b4b9ca;border-radius:4px"></div>
<div class="abs" style="left:0;top:670px;width:1530px;height:47px;background:#f8f9fb;border-top:1px solid #e0e1e6"></div>
<svg class="abs" style="left:17.500px;top:689px" width="8.500" height="8" viewBox="0 0 9 9" fill="#5c5f66"><rect x="0" y="0" width="1.500" height="9"/><path d="M8.500 0v9L2.500 4.500z"/></svg>
<svg class="abs" style="left:50px;top:689px" width="6.500" height="8" viewBox="0 0 7 9" fill="#5c5f66"><path d="M6.500 0v9L.5 4.500z"/></svg>
<div class="abs" style="left:68px;top:678px;width:31px;height:31px;background:#cdd1f3;color:#2b35d1;font-size:13px;text-align:center;line-height:31px">1</div>
<svg class="abs" style="left:111.500px;top:689px" width="6.500" height="8" viewBox="0 0 7 9" fill="#5c5f66"><path d="M.5 0v9l6-4.500z"/></svg>
<svg class="abs" style="left:141px;top:689px" width="8.500" height="8" viewBox="0 0 9 9" fill="#5c5f66"><rect x="7.500" y="0" width="1.500" height="9"/><path d="M.5 0v9l6-4.500z"/></svg>
<span class="abs" id="pg" style="left:174px;top:686px;font-size:13px;color:#33363b">Page</span>
<div class="abs" style="left:211px;top:678px;width:65px;height:31px;border:1px solid #e2e6fa;border-radius:4px;background:#f6f7fc"><span class="abs" style="left:10px;top:7px;font-size:13px;color:#33363b">1</span></div>
<span class="abs" id="of1" style="left:283px;top:686px;font-size:13px;color:#33363b">of 1</span>
<div class="abs" style="left:317px;top:678px;width:65px;height:31px;border:1px solid #e2e6fa;border-radius:4px;background:#f6f7fc;overflow:hidden"><span class="abs" style="left:10px;top:7px;font-size:13px;color:#33363b;width:17px;overflow:hidden;white-space:nowrap">100</span><div class="abs" style="right:-1px;top:-1px;width:29px;height:31px;background:#e8ecfd"><i class="tri" style="left:10.500px;top:12px"></i></div></div>
<span class="abs" id="ipp" style="left:389px;top:686px;font-size:13px;color:#33363b;white-space:nowrap">items per page</span>
<span class="abs" id="cnt" style="right:47px;top:686px;font-size:13px;color:#33363b;white-space:nowrap">1 - 38 of 38 items</span>
<svg class="abs" style="left:1502px;top:685px" width="16" height="17" viewBox="0 0 16 17" fill="none" stroke="#1f2226" stroke-width="1.800"><path d="M8 3.200a6 6 0 1 0 6 6"/><path d="M7.200 0l4.300 3.200L7.200 6.400z" fill="#1f2226" stroke="none"/></svg>
</div></div>
</body></html>
